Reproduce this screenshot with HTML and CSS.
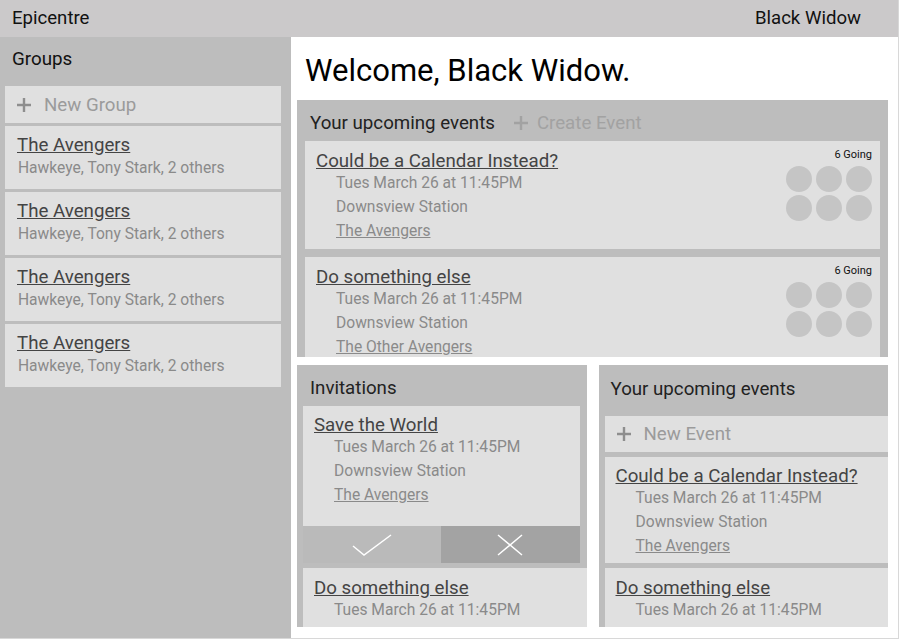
FILE: index.html
```html
<!DOCTYPE html>
<html lang="en">
<head>
    <meta charset="UTF-8">
    <meta name="viewport" content="width=device-width, initial-scale=1.0">
    <title>Epicentre</title>
    <link rel="stylesheet" href="styles.css">
</head>
<body>
    <div class="app">
        <header class="topbar">
            <span class="brand">Epicentre</span>
            <span class="user">Black Widow</span>
        </header>

        <div class="layout">
            <!-- Groups sidebar -->
            <aside class="sidebar">
                <h2 class="sidebar-title">Groups</h2>
                <div class="group-list">
                    <div class="card add-card">
                        <svg class="plus" viewBox="0 0 14 14" width="14" height="14"><path d="M7 0v14M0 7h14"/></svg>
                        <span>New Group</span>
                    </div>
                    <div class="card group-card">
                        <a class="link-title" href="#">The Avengers</a>
                        <p class="members">Hawkeye, Tony Stark, 2 others</p>
                    </div>
                    <div class="card group-card">
                        <a class="link-title" href="#">The Avengers</a>
                        <p class="members">Hawkeye, Tony Stark, 2 others</p>
                    </div>
                    <div class="card group-card">
                        <a class="link-title" href="#">The Avengers</a>
                        <p class="members">Hawkeye, Tony Stark, 2 others</p>
                    </div>
                    <div class="card group-card">
                        <a class="link-title" href="#">The Avengers</a>
                        <p class="members">Hawkeye, Tony Stark, 2 others</p>
                    </div>
                </div>
            </aside>

            <main class="main">
                <h1 class="welcome">Welcome, Black Widow.</h1>

                <section class="panel panel-wide">
                    <div class="panel-head">
                        <span>Your upcoming events</span>
                        <span class="create">
                            <svg class="plus" viewBox="0 0 14 14" width="14" height="14"><path d="M7 0v14M0 7h14"/></svg>
                            Create Event
                        </span>
                    </div>
                    <div class="event-list">
                        <div class="card event event-big">
                            <div class="event-info">
                                <a class="link-title" href="#">Could be a Calendar Instead?</a>
                                <div class="details">
                                    <p>Tues March 26 at 11:45PM</p>
                                    <p>Downsview Station</p>
                                    <p><a href="#">The Avengers</a></p>
                                </div>
                            </div>
                            <div class="attendees">
                                <p class="going">6 Going</p>
                                <div class="avatars">
                                    <span></span><span></span><span></span>
                                    <span></span><span></span><span></span>
                                </div>
                            </div>
                        </div>
                        <div class="card event event-big">
                            <div class="event-info">
                                <a class="link-title" href="#">Do something else</a>
                                <div class="details">
                                    <p>Tues March 26 at 11:45PM</p>
                                    <p>Downsview Station</p>
                                    <p><a href="#">The Other Avengers</a></p>
                                </div>
                            </div>
                            <div class="attendees">
                                <p class="going">6 Going</p>
                                <div class="avatars">
                                    <span></span><span></span><span></span>
                                    <span></span><span></span><span></span>
                                </div>
                            </div>
                        </div>
                    </div>
                </section>

                <div class="panel-row">
                    <!-- Invitations -->
                    <section class="panel invites">
                        <div class="panel-head">Invitations</div>
                        <div class="invite">
                            <div class="card event invite-body">
                                <div class="event-info">
                                    <a class="link-title" href="#">Save the World</a>
                                    <div class="details">
                                        <p>Tues March 26 at 11:45PM</p>
                                        <p>Downsview Station</p>
                                        <p><a href="#">The Avengers</a></p>
                                    </div>
                                </div>
                            </div>
                            <div class="invite-actions">
                                <button class="accept-btn">
                                    <svg viewBox="0 0 40 24" width="40" height="24"><path d="M1 13 L12 22 L39 2"/></svg>
                                </button>
                                <button class="decline-btn">
                                    <svg viewBox="0 0 26 22" width="26" height="22"><path d="M1 1 L25 21 M25 1 L1 21"/></svg>
                                </button>
                            </div>
                        </div>
                        <div class="card event invite-next">
                            <div class="event-info">
                                <a class="link-title" href="#">Do something else</a>
                                <div class="details">
                                    <p>Tues March 26 at 11:45PM</p>
                                    <p>Downsview Station</p>
                                    <p><a href="#">The Avengers</a></p>
                                </div>
                            </div>
                        </div>
                    </section>

                    <!-- Upcoming list -->
                    <section class="panel upcoming">
                        <div class="panel-head">Your upcoming events</div>
                        <div class="upcoming-list">
                            <div class="card add-card new-event">
                                <svg class="plus" viewBox="0 0 14 14" width="14" height="14"><path d="M7 0v14M0 7h14"/></svg>
                                <span>New Event</span>
                            </div>
                            <div class="card event event-mid">
                                <div class="event-info">
                                    <a class="link-title" href="#">Could be a Calendar Instead?</a>
                                    <div class="details">
                                        <p>Tues March 26 at 11:45PM</p>
                                        <p>Downsview Station</p>
                                        <p><a href="#">The Avengers</a></p>
                                    </div>
                                </div>
                            </div>
                            <div class="card event event-last">
                                <div class="event-info">
                                    <a class="link-title" href="#">Do something else</a>
                                    <div class="details">
                                        <p>Tues March 26 at 11:45PM</p>
                                        <p>Downsview Station</p>
                                        <p><a href="#">The Avengers</a></p>
                                    </div>
                                </div>
                            </div>
                        </div>
                    </section>
                </div>
            </main>
        </div>
    </div>
</body>
</html>
```

FILE: styles.css
```css
body {
    font-family: Roboto, 'Noto Sans', sans-serif;
    background-color: white;
    margin: 0;
    color: #111;
}

p {
    margin: 0;
}

a {
    color: inherit;
}

.app {
    width: 898px;
    height: 638px;
    border-right: 1px solid #d8d8d8;
    border-bottom: 1px solid #d8d8d8;
    display: flex;
    flex-direction: column;
    overflow: hidden;
}

.topbar {
    height: 37px;
    box-sizing: border-box;
    flex-shrink: 0;
    background-color: #cbc9ca;
    display: flex;
    justify-content: space-between;
    align-items: center;
    padding: 0 37px 2px 12px;
    font-size: 18.6px;
}

.layout {
    flex: 1;
    display: flex;
    min-height: 0;
}

/* Sidebar */
.sidebar {
    width: 291px;
    flex-shrink: 0;
    background-color: #bdbdbd;
}

.sidebar-title {
    margin: 0;
    height: 49px;
    line-height: 44px;
    padding-left: 12px;
    font-size: 18.8px;
    font-weight: normal;
}

.group-list {
    display: flex;
    flex-direction: column;
    gap: 3px;
    padding: 0 10px 0 5px;
}

.card {
    background-color: #e0e0e0;
}

.add-card {
    height: 37px;
    display: flex;
    align-items: center;
    gap: 13px;
    padding-left: 12px;
    font-size: 18.7px;
    color: #9b9b9b;
}

.plus path {
    stroke: #8e8e8e;
    stroke-width: 2.4;
    fill: none;
}

.group-card {
    height: 63px;
    box-sizing: border-box;
    padding: 8px 12px;
}

.link-title {
    display: inline-block;
    font-size: 18.7px;
    line-height: 22px;
    color: #444;
}

.members {
    margin-top: 2px;
    padding-left: 1px;
    font-size: 15.6px;
    line-height: 20px;
    color: #8a8a8a;
}

/* Main area */
.main {
    flex: 1;
    min-width: 0;
    display: flex;
    flex-direction: column;
    padding: 0 10px 11px 6px;
}

.welcome {
    margin: 0;
    height: 63px;
    flex-shrink: 0;
    box-sizing: border-box;
    padding: 4px 0 0 8px;
    line-height: 59px;
    font-size: 31px;
    font-weight: normal;
    color: #000;
}

.panel {
    background-color: #bdbdbd;
    overflow: hidden;
}

.panel-wide {
    height: 257px;
    flex-shrink: 0;
}

.panel-head {
    height: 41px;
    box-sizing: border-box;
    padding: 5px 0 0 13px;
    display: flex;
    align-items: center;
    gap: 19px;
    font-size: 18.7px;
    color: #222;
}

.create {
    display: flex;
    align-items: center;
    gap: 9px;
    color: #a2a2a2;
}

.create .plus path {
    stroke: #a2a2a2;
}

.event-list {
    display: flex;
    flex-direction: column;
    gap: 8px;
    padding: 0 8px;
}

.event {
    display: flex;
    justify-content: space-between;
    box-sizing: border-box;
    padding: 8px 8px 8px 11px;
    flex-shrink: 0;
}

.event-big {
    height: 108px;
    padding-top: 9px;
}

.event-big .going {
    margin-top: -2px;
}

.details {
    padding-left: 20px;
    font-size: 15.6px;
    line-height: 24px;
    color: #8a8a8a;
}

.details p:first-child {
    line-height: 23px;
}

.attendees {
    display: flex;
    flex-direction: column;
    align-items: flex-end;
}

.going {
    font-size: 11px;
    line-height: 14px;
    color: #111;
}

.avatars {
    margin-top: 4px;
    display: grid;
    grid-template-columns: repeat(3, 26px);
    gap: 3px 4px;
}

.avatars span {
    width: 26px;
    height: 26px;
    border-radius: 50%;
    background-color: #c5c5c5;
}

/* Bottom row */
.panel-row {
    flex: 1;
    min-height: 0;
    margin-top: 8px;
    display: flex;
    gap: 12px;
}

.panel-row .panel {
    flex: 1;
}

.invite {
    margin: 0 7px 0 6px;
}

.invite-body {
    height: 120px;
}

.invite-actions {
    display: grid;
    grid-template-columns: 1fr 1fr;
    height: 37px;
}

.invite-actions button {
    border: none;
    padding: 0;
    cursor: pointer;
    display: flex;
    justify-content: center;
    align-items: center;
}

.invite-actions path {
    stroke: white;
    stroke-width: 1.5;
    fill: none;
}

.accept-btn {
    background-color: #bababa;
}

.decline-btn {
    background-color: #a3a3a3;
}

.invite-next {
    margin: 5px 0 0 6px;
    height: 100px;
    padding-top: 9px;
}

.upcoming .panel-head {
    height: 51px;
    padding: 0 0 4px 12px;
}

.upcoming-list {
    display: flex;
    flex-direction: column;
    gap: 5px;
    padding-left: 6px;
}

.new-event {
    height: 36px;
}

.event-mid {
    height: 106px;
}

.event-last {
    padding-top: 9px;
}
```
